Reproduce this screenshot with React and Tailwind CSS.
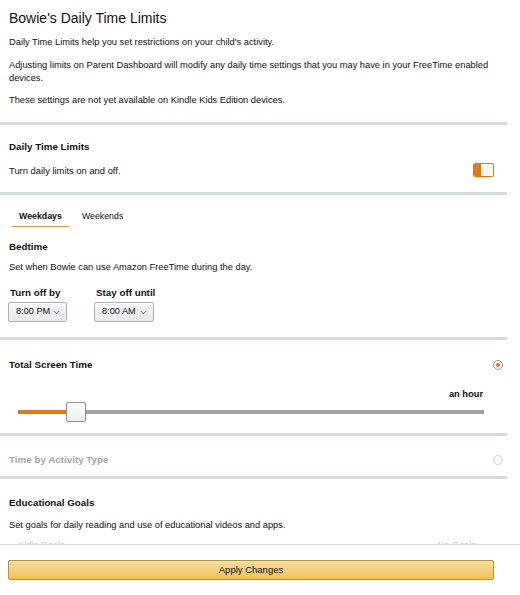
import React from "react";

function Chevron() {
  return (
    <svg width="7" height="5" viewBox="0 0 7 5" className="shrink-0">
      <polyline points="0.8,1 3.5,3.8 6.2,1" fill="none" stroke="#555" strokeWidth="0.9" />
    </svg>
  );
}

function Select({ value, width }) {
  return (
    <div
      className={`flex h-[20px] items-center justify-between rounded-[2px] border border-[#adb1b8] bg-gradient-to-b from-[#f7f8fa] to-[#e7e9ec] pl-[7px] pr-[6px] text-[9.2px] text-[#111] shadow-[0_1px_0_rgba(255,255,255,0.6)_inset] ${width}`}
    >
      <span>{value}</span>
      <Chevron />
    </div>
  );
}

function Divider() {
  return <div className="h-[3px] w-[507px] bg-[#d5dbdb]" />;
}

function Radio({ checked }) {
  return checked ? (
    <div className="flex h-[10px] w-[10px] items-center justify-center rounded-full border border-[#9a9a9a] bg-white">
      <div className="h-[4.5px] w-[4.5px] rounded-full bg-[#e47911]" />
    </div>
  ) : (
    <div className="h-[10px] w-[10px] rounded-full border border-[#cfcfcf] bg-white" />
  );
}

export default function App() {
  return (
    <div
      className="flex h-[595px] w-[520px] flex-col overflow-hidden bg-white text-[#111]"
      style={{ fontFamily: '"Liberation Sans", Arial, sans-serif' }}
    >
      <div className="flex-1 overflow-hidden">
        {/* Header */}
        <div className="w-[507px] px-[9px] pb-[15px] pt-[8px]">
          <h1 className="text-[14px] leading-[20px] font-normal">Bowie's Daily Time Limits</h1>
          <p className="mt-[8px] text-[9.3px] leading-[13px]">
            Daily Time Limits help you set restrictions on your child's activity.
          </p>
          <p className="mt-[10px] text-[9.3px] leading-[13px]">
            Adjusting limits on Parent Dashboard will modify any daily time settings that you may have in your FreeTime enabled devices.
          </p>
          <p className="mt-[9px] text-[9.3px] leading-[13px]">
            These settings are not yet available on Kindle Kids Edition devices.
          </p>
        </div>
        <Divider />

        {/* Daily Time Limits toggle */}
        <div className="w-[507px] pb-[15px] pl-[9px] pr-[13px] pt-[15px]">
          <div className="text-[9.8px] font-bold leading-[14px]">Daily Time Limits</div>
          <div className="mt-[9px] flex items-center justify-between">
            <span className="text-[9.4px] leading-[13px]">Turn daily limits on and off.</span>
            <div className="flex h-[14px] w-[21px] overflow-hidden rounded-[2px] border-[1.5px] border-[#e47911]">
              <div className="w-[7px] bg-[#e47911]" />
              <div className="flex-1 bg-[#f6f6f6]" />
            </div>
          </div>
        </div>
        <Divider />

        {/* Weekdays / Weekends */}
        <div className="w-[507px] px-[9px] pb-[15px] pt-[15px]">
          <div className="ml-[3px] flex gap-[6px]">
            <div className="border-b border-[#d9953f] px-[7px] pb-[3px] text-[8.8px] font-bold leading-[13px]">
              Weekdays
            </div>
            <div className="px-[7px] pb-[3px] text-[8.8px] leading-[13px]">Weekends</div>
          </div>
          <div className="mt-[13px] text-[9.8px] font-bold leading-[14px]">Bedtime</div>
          <p className="mt-[7px] text-[9.3px] leading-[13px]">
            Set when Bowie can use Amazon FreeTime during the day.
          </p>
          <div className="mt-[12px] flex gap-[28px]">
            <div className="flex flex-col">
              <div className="pl-[1px] text-[9.8px] font-bold leading-[14px]">Turn off by</div>
              <div className="mt-[2px] -ml-[1px]">
                <Select value="8:00 PM" width="w-[59px]" />
              </div>
            </div>
            <div className="flex flex-col">
              <div className="pl-[1px] text-[9.8px] font-bold leading-[14px]">Stay off until</div>
              <div className="mt-[2px] -ml-[1px]">
                <Select value="8:00 AM" width="w-[60px]" />
              </div>
            </div>
          </div>
        </div>
        <Divider />

        {/* Total Screen Time */}
        <div className="w-[507px] pb-[11px] pt-[18px]">
          <div className="flex items-center justify-between pl-[9px] pr-[4px]">
            <span className="text-[9.8px] font-bold leading-[14px]">Total Screen Time</span>
            <Radio checked />
          </div>
          <div className="mt-[16px] pr-[24px] text-right text-[9.3px] font-bold leading-[13px]">an hour</div>
          <div className="mt-[1px] ml-[18px] mr-[23px] flex h-[20px] items-center">
            <div className="h-[4px] w-[48px] bg-[#e47911]" />
            <div className="h-[20px] w-[20px] shrink-0 rounded-[2px] border border-[#8d9096] bg-gradient-to-b from-[#fbfcfd] to-[#eef1f5]" />
            <div className="h-[4px] flex-1 bg-[#a2a2a2]" />
          </div>
        </div>
        <Divider />

        {/* Time by Activity Type */}
        <div className="flex w-[507px] items-center justify-between pb-[9px] pl-[9px] pr-[4px] pt-[17px]">
          <span className="text-[9.8px] font-bold leading-[14px] text-[#a6a6a6]">Time by Activity Type</span>
          <Radio />
        </div>
        <Divider />

        {/* Educational Goals */}
        <div className="w-[507px] px-[9px] pt-[17px]">
          <div className="text-[9.8px] font-bold leading-[14px]">Educational Goals</div>
          <p className="mt-[9px] text-[9.3px] leading-[13px]">
            Set goals for daily reading and use of educational videos and apps.
          </p>
          <div className="mt-[7px] flex justify-between pl-[9px] pr-[22px] text-[9.3px] leading-[13px] text-[#c4c4c4]">
            <span>Kid's Goals</span>
            <span>No Goals</span>
          </div>
        </div>
      </div>

      {/* Footer */}
      <div className="h-[51px] shrink-0 border-t border-[#dddddd] bg-white pl-[8px] pt-[15px]">
        <button className="flex h-[20px] w-[486px] items-center justify-center rounded-[2px] border border-[#b8962e] bg-gradient-to-b from-[#f7dfa5] to-[#f0c14b] text-[9.5px] text-[#111]">
          Apply Changes
        </button>
      </div>
    </div>
  );
}
